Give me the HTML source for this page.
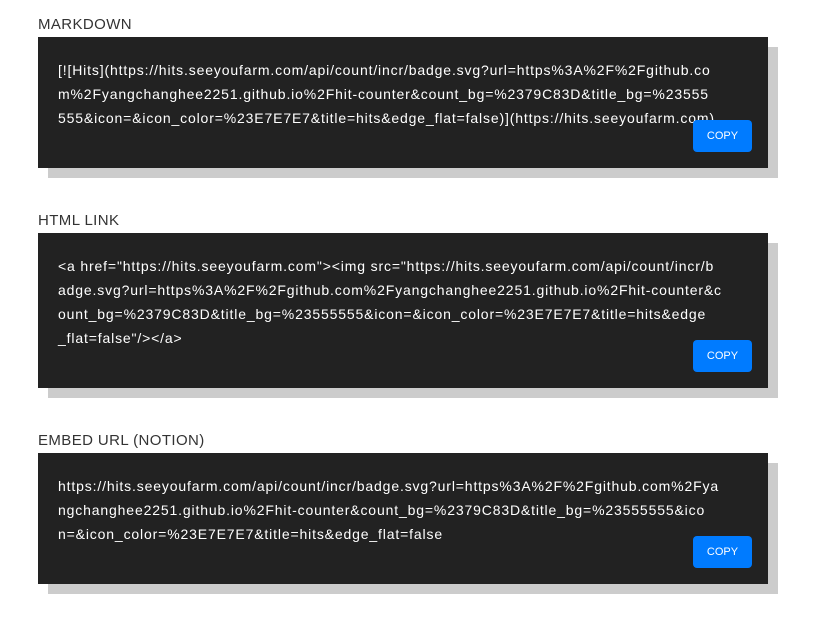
<!DOCTYPE html>
<html><head><style>
body{margin:0;background:#fff;font-family:"Liberation Sans",sans-serif;}
.lbl{position:absolute;left:38px;font-size:15px;color:#333;letter-spacing:0.4px;}
.box{position:absolute;left:38px;width:730px;background:#222;box-shadow:10px 10px 0 #cccccc;}
.t{position:absolute;left:20px;top:21px;color:#fff;font-size:14px;line-height:24px;white-space:nowrap;letter-spacing:0.85px;}
.b{position:absolute;left:655px;width:59px;height:32px;background:#007bff;border-radius:4px;color:#fff;font-size:11px;line-height:32px;text-align:center;}
</style></head><body>
<div class="lbl" style="top:16px">MARKDOWN</div>
<div class="box" style="top:37px;height:131px">
<div class="t">[![Hits](https://hits.seeyoufarm.com/api/count/incr/badge.svg?url=https%3A%2F%2Fgithub.co<br>m%2Fyangchanghee2251.github.io%2Fhit-counter&amp;count_bg=%2379C83D&amp;title_bg=%23555<br>555&amp;icon=&amp;icon_color=%23E7E7E7&amp;title=hits&amp;edge_flat=false)](https://hits.seeyoufarm.com)</div>
<div class="b" style="top:83px">COPY</div>
</div>
<div class="lbl" style="top:212px">HTML LINK</div>
<div class="box" style="top:233px;height:155px">
<div class="t">&lt;a href="https://hits.seeyoufarm.com"&gt;&lt;img src="https://hits.seeyoufarm.com/api/count/incr/b<br>adge.svg?url=https%3A%2F%2Fgithub.com%2Fyangchanghee2251.github.io%2Fhit-counter&amp;c<br>ount_bg=%2379C83D&amp;title_bg=%23555555&amp;icon=&amp;icon_color=%23E7E7E7&amp;title=hits&amp;edge<br>_flat=false"/&gt;&lt;/a&gt;</div>
<div class="b" style="top:107px">COPY</div>
</div>
<div class="lbl" style="top:432px">EMBED URL (NOTION)</div>
<div class="box" style="top:453px;height:131px">
<div class="t">https://hits.seeyoufarm.com/api/count/incr/badge.svg?url=https%3A%2F%2Fgithub.com%2Fya<br>ngchanghee2251.github.io%2Fhit-counter&amp;count_bg=%2379C83D&amp;title_bg=%23555555&amp;ico<br>n=&amp;icon_color=%23E7E7E7&amp;title=hits&amp;edge_flat=false</div>
<div class="b" style="top:83px">COPY</div>
</div>
</body></html>
